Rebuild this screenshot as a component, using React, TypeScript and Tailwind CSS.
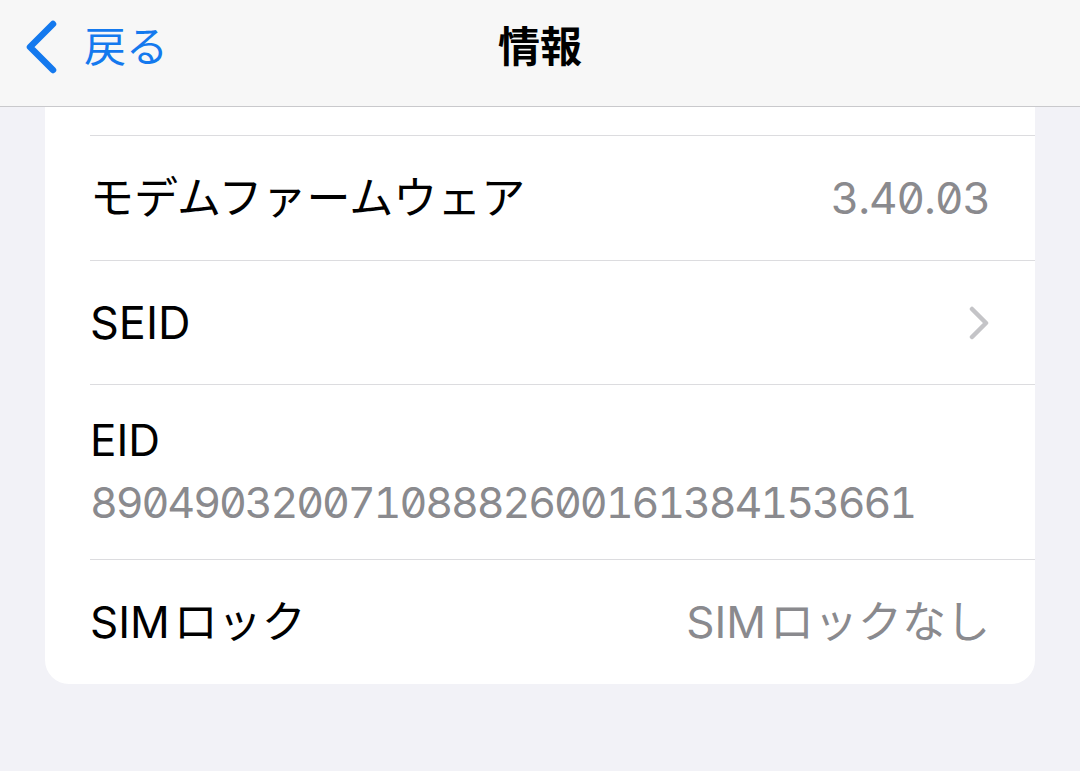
import React from "react";

const font = { fontFamily: 'Inter, "Noto Sans CJK JP", sans-serif' };

function Sep() {
  return <div className="ml-[45px] h-px bg-[#dcdcdf]" />;
}

export default function App() {
  return (
    <div
      className="w-[1080px] h-[771px] bg-[#f2f2f7] overflow-hidden flex flex-col"
      style={font}
    >
      <header className="h-[107px] shrink-0 bg-[#f7f7f7] border-b border-[#c9c9cc] flex items-center relative">
        <div className="flex items-center pl-[24px] gap-[26px] text-[#1479ee] pb-[12px]">
          <svg width="34" height="54" viewBox="0 0 34 54" fill="none">
            <path
              d="M29 4 L6 27 L29 50"
              stroke="#1479ee"
              strokeWidth="6.5"
              strokeLinecap="round"
              strokeLinejoin="round"
            />
          </svg>
          <span className="text-[42px] leading-none tracking-[0px]">戻る</span>
        </div>
        <div className="absolute left-0 right-0 top-0 bottom-[12px] flex items-center justify-center pointer-events-none">
          <span className="text-[42px] font-bold leading-none text-black">情報</span>
        </div>
      </header>

      <div className="mx-[45px] bg-white rounded-b-[24px] flex flex-col">
        <div className="h-[28px]" />
        <Sep />
        <div className="h-[124px] flex items-center justify-between pl-[45px] pr-[45px]">
          <span className="text-[44px] leading-none text-black tracking-[0px]">モデムファームウェア</span>
          <span className="text-[44px] leading-none text-[#8a8a8e] tabular-nums [font-feature-settings:'zero','tnum'] tracking-[-1px]">
            3.40.03
          </span>
        </div>
        <Sep />
        <div className="h-[123px] flex items-center justify-between pl-[45px] pr-[46px]">
          <span className="text-[45px] leading-none text-black">SEID</span>
          <svg width="20" height="34" viewBox="0 0 20 34" fill="none">
            <path
              d="M3 3 L17 17 L3 31"
              stroke="#c4c4c7"
              strokeWidth="4.5"
              strokeLinecap="round"
              strokeLinejoin="round"
            />
          </svg>
        </div>
        <Sep />
        <div className="h-[174px] flex flex-col justify-center pl-[45px] gap-[19px] pb-[2px]">
          <span className="text-[44px] leading-none text-black">EID</span>
          <span className="text-[43px] leading-none text-[#8a8a8e] tabular-nums [font-feature-settings:'zero','tnum'] tracking-[-2.1px]">
            89049032007108882600161384153661
          </span>
        </div>
        <Sep />
        <div className="h-[124px] flex items-center justify-between pl-[45px] pr-[45px]">
          <span className="text-[44px] leading-none text-black">
            SIM<span className="ml-[4px]">ロック</span>
          </span>
          <span className="text-[44px] leading-none text-[#8a8a8e]">
            SIM<span className="ml-[4px]">ロックなし</span>
          </span>
        </div>
      </div>
    </div>
  );
}
